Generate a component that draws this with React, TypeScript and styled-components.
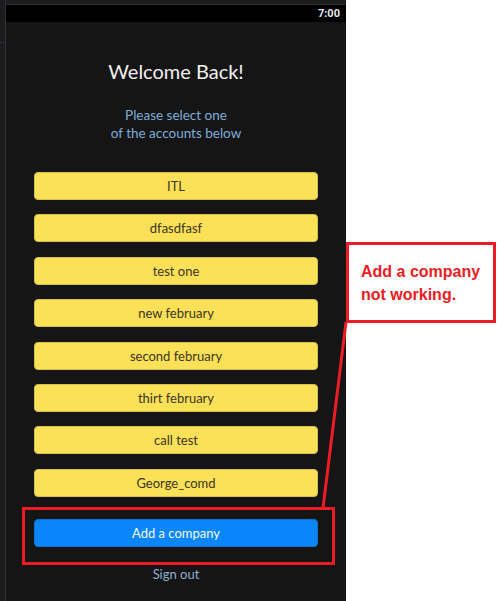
import React from "react";
import styled, { createGlobalStyle } from "styled-components";

const accounts = [
  "ITL",
  "dfasdfasf",
  "test one",
  "new february",
  "second february",
  "thirt february",
  "call test",
  "George_comd",
];

const App = () => {
  return (
    <>
      <GlobalStyle />
      <Page>
        <LeftStrip />
        <Frame>
          <Screen>
            <StatusBar>
              <Time>7:00</Time>
            </StatusBar>
            <Content>
              <Title>Welcome Back!</Title>
              <Subtitle>
                Please select one
                <br />
                of the accounts below
              </Subtitle>
              <AccountList>
                {accounts.map((name) => (
                  <AccountButton key={name}>{name}</AccountButton>
                ))}
              </AccountList>
              <AddButton>Add a company</AddButton>
              <SignOut>Sign out</SignOut>
            </Content>
          </Screen>
        </Frame>

        <Overlay width="499" height="601" viewBox="0 0 499 601">
          <rect x="23.5" y="508.5" width="310" height="55" fill="none" stroke="#ed1c24" strokeWidth="3" />
          <line x1="346" y1="322" x2="323" y2="508" stroke="#ed1c24" strokeWidth="3" />
          <rect x="347.5" y="243.5" width="147" height="78" fill="#ffffff" stroke="#ed1c24" strokeWidth="3" />
        </Overlay>
        <CalloutText>
          Add a company
          <br />
          not working.
        </CalloutText>
      </Page>
    </>
  );
};

const GlobalStyle = createGlobalStyle`
  html, body {
    margin: 0;
    padding: 0;
    background: #ffffff;
  }
  body {
    font-family: "Lato", "Noto Sans", sans-serif;
  }
`;

const Page = styled.div`
  position: relative;
  width: 499px;
  height: 601px;
  display: flex;
  background: #ffffff;
  overflow: hidden;
`;

const LeftStrip = styled.div`
  width: 5px;
  background: #1c1c1c;
  border-right: 1px solid #2e2e3a;
  position: relative;
  &::after {
    content: "";
    position: absolute;
    left: 0;
    right: 0;
    top: 42px;
    height: 1px;
    background: #2e2e3a;
  }
`;

const Frame = styled.div`
  width: 340px;
  padding-top: 4px;
  background: #1c1c1c;
  display: flex;
  flex-direction: column;
`;

const Screen = styled.div`
  flex: 1;
  border-top: 1px solid #2e2e3a;
  background: #151515;
  display: flex;
  flex-direction: column;
`;

const StatusBar = styled.div`
  height: 17px;
  background: #000000;
  display: flex;
  align-items: center;
  justify-content: flex-end;
  padding-right: 6px;
`;

const Time = styled.span`
  color: #e8e8e8;
  font-family: "Roboto", sans-serif;
  font-weight: 700;
  font-size: 11px;
`;

const Content = styled.div`
  display: flex;
  flex-direction: column;
  align-items: center;
  padding-top: 37px;
`;

const Title = styled.h1`
  margin: 0;
  color: #f0f0f0;
  font-size: 20px;
  font-weight: 400;
  line-height: 24px;
`;

const Subtitle = styled.p`
  margin: 23px 0 0;
  color: #7eaedb;
  font-size: 13.5px;
  line-height: 18px;
  text-align: center;
`;

const AccountList = styled.div`
  margin-top: 30px;
  display: flex;
  flex-direction: column;
  gap: 14.4px;
`;

const BaseButton = styled.button`
  width: 284px;
  height: 28px;
  border-radius: 4px;
  font-family: "Lato", "Noto Sans", sans-serif;
  font-size: 13px;
  padding: 0;
  cursor: pointer;
`;

const AccountButton = styled(BaseButton)`
  background: #fce058;
  border: 1px solid #d8c04a;
  color: #3b3522;
`;

const AddButton = styled(BaseButton)`
  margin-top: 22px;
  background: #0a86fb;
  border: 1px solid #1070d0;
  color: #f4f8ff;
`;

const SignOut = styled.div`
  margin-top: 19px;
  color: #8fb0d0;
  font-size: 13px;
`;

const Overlay = styled.svg`
  position: absolute;
  left: 0;
  top: 0;
  pointer-events: none;
`;

const CalloutText = styled.div`
  position: absolute;
  left: 361px;
  top: 260px;
  color: #ed1c24;
  font-family: "Liberation Sans", sans-serif;
  font-weight: 700;
  font-size: 16px;
  line-height: 23px;
`;

export default App;
